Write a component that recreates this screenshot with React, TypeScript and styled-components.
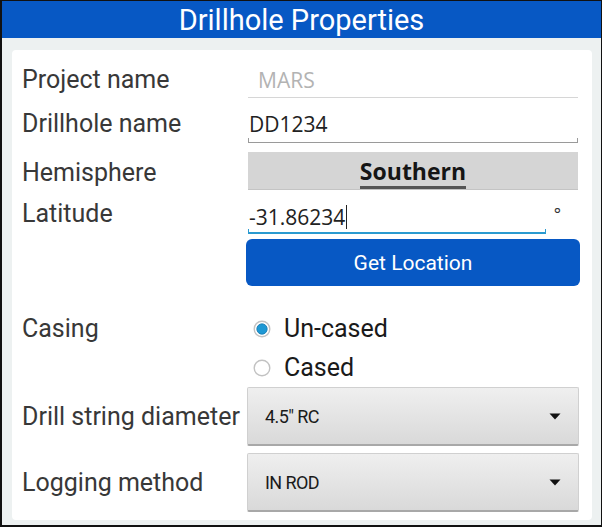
import React from "react";
import styled, { createGlobalStyle } from "styled-components";

const Global = createGlobalStyle`
  html, body { margin: 0; padding: 0; background: #fff; }
  body { font-family: Roboto, "Noto Sans", "Liberation Sans", sans-serif; }
  * { box-sizing: border-box; }
`;

const Frame = styled.div`
  width: 602px;
  height: 527px;
  border: 1px solid #111;
  border-left-width: 2px;
  border-bottom-width: 2px;
  background: #edf1f1;
  display: flex;
  flex-direction: column;
  overflow: hidden;
`;

const Header = styled.div`
  height: 37px;
  background: #0758c4;
  color: #fff;
  font-size: 29px;
  display: flex;
  align-items: center;
  justify-content: center;
  padding-top: 1px;
`;

const Card = styled.div`
  margin: 12px 9px 5px 10px;
  flex: 1;
  background: #fff;
  border-radius: 4px;
  padding: 7px 0 0 10px;
  display: flex;
  flex-direction: column;
`;

const Row = styled.div<{ $h: number; $mt?: number }>`
  display: flex;
  align-items: center;
  height: ${(p) => p.$h}px;
  margin-top: ${(p) => p.$mt ?? 0}px;
`;

const Label = styled.div<{ $dy?: number }>`
  width: 226px;
  flex: none;
  font-size: 25px;
  color: #383838;
  white-space: nowrap;
  position: relative;
  top: ${(p) => p.$dy ?? 0}px;
`;

const Field = styled.div<{ $w?: number }>`
  width: ${(p) => p.$w ?? 330}px;
  height: 100%;
  position: relative;
  display: flex;
  align-items: center;
`;

const InputText = styled.div<{ $muted?: boolean }>`
  font-family: "Open Sans", "Noto Sans", sans-serif;
  font-size: 21px;
  color: ${(p) => (p.$muted ? "#b3b3b3" : "#222")};
  padding-left: ${(p) => (p.$muted ? 10 : 1)}px;
  padding-top: 3px;
  display: flex;
  align-items: center;
`;

const Underline = styled.div<{ $color: string; $thick: number; $ticks?: boolean }>`
  position: absolute;
  left: 0;
  right: 0;
  bottom: 2px;
  height: ${(p) => p.$thick}px;
  background: ${(p) => p.$color};
  &::before, &::after {
    content: "";
    display: ${(p) => (p.$ticks ? "block" : "none")};
    position: absolute;
    bottom: 0;
    width: 1px;
    height: 5px;
    background: ${(p) => p.$color};
  }
  &::before { left: 0; }
  &::after { right: 0; }
`;

const Cursor = styled.span`
  display: inline-block;
  width: 1px;
  height: 24px;
  background: #222;
  margin-left: 1px;
`;

const Degree = styled.div`
  position: absolute;
  right: -15px;
  top: 8px;
  font-family: "Open Sans", sans-serif;
  font-size: 17px;
  color: #333;
`;

const ToggleButton = styled.div`
  width: 330px;
  height: 38px;
  background: #d5d5d5;
  border-bottom: 1px solid #c4c4c4;
  display: flex;
  align-items: center;
  justify-content: center;
`;

const ToggleText = styled.span`
  font-family: "Open Sans", "Noto Sans", sans-serif;
  font-size: 23px;
  font-weight: bold;
  color: #151515;
  padding-bottom: 1px;
  border-bottom: 3px solid #555;
  line-height: 28px;
  margin-top: 4px;
`;

const PrimaryButton = styled.div`
  margin-left: 224px;
  width: 334px;
  height: 47px;
  background: #0758c4;
  border-radius: 6px;
  color: #fff;
  font-size: 21px;
  display: flex;
  align-items: center;
  justify-content: center;
  margin-top: 3px;
`;

const CasingRow = styled.div`
  display: flex;
  align-items: flex-start;
  padding-top: 23px;
`;

const LabelCell = styled.div`
  height: 39px;
  display: flex;
  align-items: center;
`;

const RadioGroup = styled.div`
  display: flex;
  flex-direction: column;
  padding-left: 5px;
`;

const RadioRow = styled.div`
  display: flex;
  align-items: center;
  height: 39px;
  gap: 13px;
  font-size: 25px;
  color: #1a1a1a;
`;

const RadioIcon = ({ checked }: { checked: boolean }) => (
  <svg width="18" height="18" viewBox="0 0 18 18">
    <circle cx="9" cy="9" r="7.8" fill="#fff" stroke="#c2c2c2" strokeWidth="1.4" />
    {checked && <circle cx="9" cy="9" r="5.2" fill="#1e98d4" stroke="#1578b0" strokeWidth="0.8" />}
  </svg>
);

const Spinner = styled.div`
  width: 332px;
  height: 59px;
  margin-left: -1px;
  background: linear-gradient(#efefef, #d9d9d9);
  border: 1px solid #d0d0d0;
  border-bottom: 2px solid #a8a8a8;
  border-radius: 2px;
  display: flex;
  align-items: center;
  justify-content: space-between;
  padding: 0 17px 0 17px;
  font-size: 18px;
  letter-spacing: -0.6px;
  color: #1a1a1a;
`;

const Caret = () => (
  <svg width="12" height="7" viewBox="0 0 12 7">
    <path d="M0.5 0.5 H11.5 L6 6.5 Z" fill="#111" />
  </svg>
);

export default function App() {
  return (
    <>
      <Global />
      <Frame>
        <Header>Drillhole Properties</Header>
        <Card>
          <Row $h={43}>
            <Label $dy={1}>Project name</Label>
            <Field>
              <InputText $muted>MARS</InputText>
              <Underline $color="#d6d6d6" $thick={1} />
            </Field>
          </Row>
          <Row $h={45}>
            <Label $dy={1}>Drillhole name</Label>
            <Field>
              <InputText>DD1234</InputText>
              <Underline $color="#9a9a9a" $thick={1} $ticks />
            </Field>
          </Row>
          <Row $h={38} $mt={7}>
            <Label $dy={1}>Hemisphere</Label>
            <ToggleButton>
              <ToggleText>Southern</ToggleText>
            </ToggleButton>
          </Row>
          <Row $h={42} $mt={4}>
            <Label $dy={-2}>Latitude</Label>
            <Field $w={298}>
              <InputText>
                -31.86234<Cursor />
              </InputText>
              <Underline $color="#2a9ad0" $thick={2} $ticks />
              <Degree>°</Degree>
            </Field>
          </Row>
          <PrimaryButton>Get Location</PrimaryButton>
          <CasingRow>
            <LabelCell>
              <Label>Casing</Label>
            </LabelCell>
            <RadioGroup>
              <RadioRow>
                <RadioIcon checked />
                Un-cased
              </RadioRow>
              <RadioRow>
                <RadioIcon checked={false} />
                Cased
              </RadioRow>
            </RadioGroup>
          </CasingRow>
          <Row $h={59}>
            <Label>Drill string diameter</Label>
            <Spinner>
              <span>4.5" RC</span>
              <Caret />
            </Spinner>
          </Row>
          <Row $h={59} $mt={7}>
            <Label>Logging method</Label>
            <Spinner>
              <span>IN ROD</span>
              <Caret />
            </Spinner>
          </Row>
        </Card>
      </Frame>
    </>
  );
}
